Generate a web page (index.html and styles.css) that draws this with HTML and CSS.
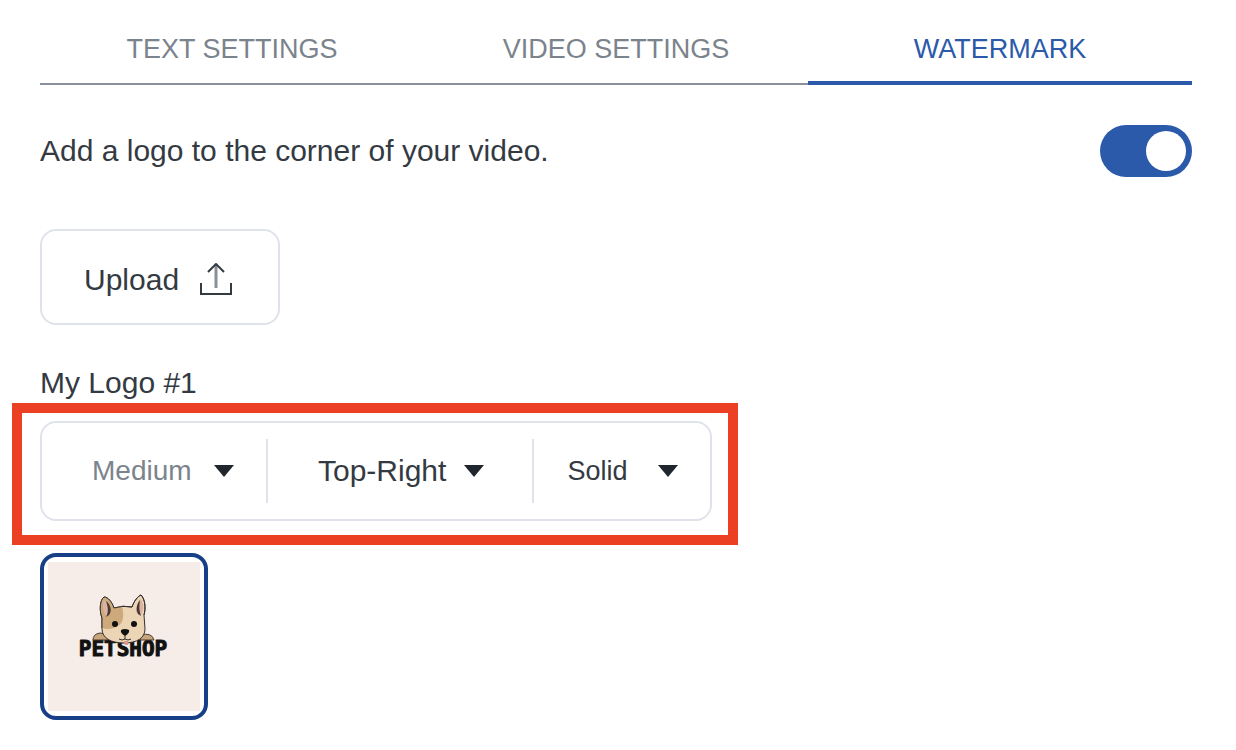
FILE: index.html
```
<!DOCTYPE html>
<html lang="en">
<head>
    <meta charset="UTF-8">
    <meta name="viewport" content="width=device-width, initial-scale=1.0">
    <title>Watermark settings</title>
    <link rel="stylesheet" href="styles.css">
</head>
<body>
    <main class="settings">
        <div class="tabs" role="tablist">
            <button type="button" class="tab" role="tab" aria-selected="false">TEXT SETTINGS</button>
            <button type="button" class="tab" role="tab" aria-selected="false">VIDEO SETTINGS</button>
            <button type="button" class="tab active" role="tab" aria-selected="true">WATERMARK</button>
        </div>

        <div class="toggle-row">
            <label for="watermark-toggle">Add a logo to the corner of your video.</label>
            <input type="checkbox" class="toggle" id="watermark-toggle" role="switch" checked>
        </div>

        <button type="button" class="upload">
            Upload
            <svg class="upload-icon" viewBox="0 0 34 34" aria-hidden="true">
                <path d="M2 20v11h30V20"/>
                <path class="upload-arrow" d="M17 25V2"/>
                <path d="M9 9l8-8 8 8"/>
            </svg>
        </button>

        <h2 class="logo-name">My Logo #1</h2>

        <div class="highlight">
            <div class="options">
                <div class="option option-size">
                    <select aria-label="Logo size">
                        <option>Small</option>
                        <option selected>Medium</option>
                        <option>Large</option>
                    </select>
                    <svg class="arrow" viewBox="0 0 20 12" aria-hidden="true"><path d="M0 0h20L10 12z"/></svg>
                </div>
                <div class="option option-position">
                    <select aria-label="Logo position">
                        <option>Top-Left</option>
                        <option selected>Top-Right</option>
                    </select>
                    <svg class="arrow" viewBox="0 0 20 12" aria-hidden="true"><path d="M0 0h20L10 12z"/></svg>
                </div>
                <div class="option option-opacity">
                    <select aria-label="Logo opacity">
                        <option selected>Solid</option>
                        <option>Faded</option>
                    </select>
                    <svg class="arrow" viewBox="0 0 20 12" aria-hidden="true"><path d="M0 0h20L10 12z"/></svg>
                </div>
            </div>
        </div>

        <button type="button" class="logo-card" aria-label="Petshop logo">
            <svg viewBox="0 0 152 149">
                <rect width="152" height="149" fill="#f7ede8"/>
                <text class="brand" x="75" y="94" text-anchor="middle">PETSHOP</text>
                <!-- paws -->
                <g fill="#c9a57c" stroke="#4a3d33" stroke-width="1">
                    <path d="M45 78q0-6 7-7 5 0 8 3v4z"/>
                    <path d="M92 73q12-3 14 5H92z"/>
                </g>
                <!-- head and ears -->
                <path d="M54 56C51 48 52 38 56 35c4 0 8 5 10 11q9-3 18-1c2-6 6-11 9-12 4 4 5 13 3 20l1 14c0 9-8 14-21 14s-22-5-22-14z" fill="#ecd5b4" stroke="#33302e" stroke-width="1"/>
                <path d="M54 56C51 48 52 38 56 35c4 0 8 5 10 11l8-2c2 8 2 17-4 20-5 3-11 4-16 2z" fill="#cda97c"/>
                <path d="M56 38c3 2 6 8 6 12l-4 4c-3-4-4-11-2-16z" fill="#dcb2a5"/>
                <path d="M58 39c5 4 6 10 3 14l-3 2c3-5 2-10 0-16z" fill="#49382f"/>
                <path d="M93 37c3 5 3 12 0 16l-5-3c0-5 2-10 5-13z" fill="#dcb2a5"/>
                <path d="M92 38c-4 5-4 10-2 14l3 2c-2-5-2-10-1-16z" fill="#49382f"/>
                <path d="M54 66V56C51 48 52 38 56 35c4 0 8 5 10 11q9-3 18-1c2-6 6-11 9-12 4 4 5 13 3 20" fill="none" stroke="#33302e" stroke-width="1"/>
                <!-- face -->
                <circle cx="67" cy="62" r="3" fill="#111"/>
                <circle cx="86" cy="62" r="3" fill="#111"/>
                <path d="M73 68q4-2 8 0 1 3-4 6-5-3-4-6z" fill="#111"/>
                <path d="M77 73v4M71 77q3 2 6 0 3 2 6 0" fill="none" stroke="#33302e" stroke-width="1"/>
                <path d="M76 79h4v3q-2 2-4 0z" fill="#d9968c"/>
            </svg>
        </button>
    </main>
</body>
</html>
```
FILE: styles.css
```
* {
    box-sizing: border-box;
}
body {
    margin: 0;
    background: #fff;
    color: #343a42;
    font-family: "Liberation Sans", Arial, sans-serif;
    font-size: 30px;
    line-height: 36px;
}
button, select {
    font: inherit;
    color: inherit;
    background: none;
    cursor: pointer;
}
.settings {
    display: flex;
    flex-direction: column;
    align-items: flex-start;
    padding: 15px 44px 30px 40px;
}

/* Tabs */
.tabs {
    display: flex;
    align-self: stretch;
    align-items: flex-end;
}
.tab {
    flex: 1;
    padding: 16px 0;
    border: 0;
    border-bottom: 2px solid #8b919b;
    color: #7b838c;
    font-size: 27px;
}
.tab.active {
    padding-bottom: 14px;
    border-bottom: 4px solid #2a5aa9;
    color: #2a5aa9;
}

/* Toggle */
.toggle-row {
    display: flex;
    align-self: stretch;
    align-items: center;
    justify-content: space-between;
    margin-top: 40px;
}
.toggle {
    appearance: none;
    display: flex;
    align-items: center;
    justify-content: flex-end;
    width: 92px;
    height: 52px;
    margin: 0;
    padding: 0 6px;
    border-radius: 26px;
    background: #2a5aa9;
    cursor: pointer;
}
.toggle::before {
    content: "";
    width: 40px;
    height: 40px;
    border-radius: 50%;
    background: #fff;
}
.toggle:not(:checked) {
    justify-content: flex-start;
    background: #8b919b;
}

/* Upload */
.upload {
    display: flex;
    align-items: center;
    gap: 20px;
    margin-top: 52px;
    padding: 31px 45px 25px 42px;
    border: 2px solid #dfe3e9;
    border-radius: 16px;
}
.upload-icon {
    width: 34px;
    height: 34px;
    fill: none;
    stroke: #343a42;
    stroke-width: 2;
}
.upload-arrow {
    stroke: #8b9097;
    stroke-width: 3;
}
.logo-name {
    margin: 40px 0 2px;
    font-size: 30px;
    font-weight: normal;
}

/* Logo options */
.highlight {
    width: 100%;
    max-width: 726px;
    margin-left: -28px;
    padding: 8px 16px 14px 18px;
    border: 10px solid #ec4024;
}
.options {
    display: flex;
    align-items: center;
    padding: 16px 0;
    border: 2px solid #dfe3e9;
    border-radius: 16px;
}
.option {
    display: grid;
    align-items: center;
}
.option + .option {
    border-left: 2px solid #dfe3e9;
}
.option select,
.option .arrow {
    grid-area: 1 / 1;
}
.option select {
    appearance: none;
    width: 100%;
    height: 64px;
    padding: 0 0 0 50px;
    border: 0;
}
.arrow {
    justify-self: end;
    width: 20px;
    height: 12px;
    margin-right: 32px;
    fill: #1f262d;
    pointer-events: none;
}
.option-size {
    flex: 226;
}
.option-size select {
    color: #7b838c;
    font-size: 28px;
}
.option-position {
    flex: 266;
}
.option-position .arrow {
    margin-right: 48px;
}
.option-opacity {
    flex: 178;
}
.option-opacity select {
    padding-left: 34px;
    font-size: 27px;
}

/* Logo preview */
.logo-card {
    width: 168px;
    margin-top: 8px;
    padding: 5px 4px;
    border: 4px solid #173f87;
    border-radius: 16px;
}
.logo-card svg {
    display: block;
    width: 100%;
}
.brand {
    font-family: "DejaVu Sans Mono", monospace;
    font-size: 21px;
    font-weight: 700;
    fill: #111;
    stroke: #111;
    stroke-width: 1;
    stroke-linejoin: round;
}
```
